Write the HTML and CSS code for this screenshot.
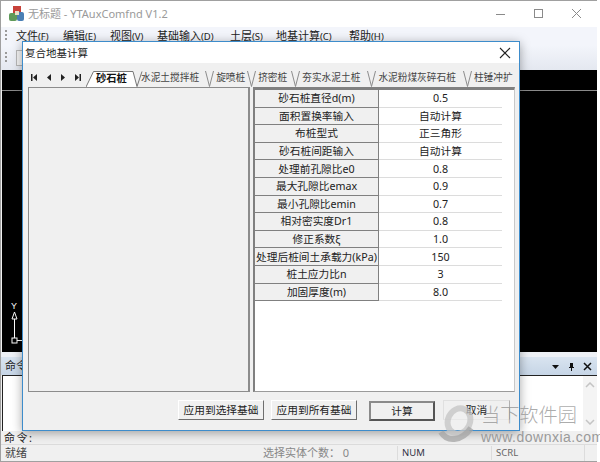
FILE: index.html
```html
<!DOCTYPE html>
<html lang="zh-CN">
<head>
    <meta charset="UTF-8">
    <title>无标题 - YTAuxComfnd V1.2</title>
    <link rel="stylesheet" href="styles.css">
</head>
<body>

    <div class="app">
        <!-- Main window title -->
        <div class="titlebar">
            <svg class="app-icon" width="18" height="18" viewBox="0 0 18 18">
                <rect x="5" y="1" width="8" height="7" fill="#c8423a"/>
                <rect x="1" y="8" width="8" height="8" rx="2" fill="#5f9a5a"/>
                <rect x="9" y="7" width="7" height="9" rx="2" fill="#4a7fb5"/>
                <rect x="7" y="6" width="4" height="4" fill="#e8e0c8"/>
            </svg>
            <span class="app-title">无标题 - YTAuxComfnd V1.2</span>
            <div class="win-controls">
                <svg width="12" height="12" viewBox="0 0 12 12"><path d="M1 6.500h9" stroke="#8a8a8a" fill="none"/></svg>
                <svg width="12" height="12" viewBox="0 0 12 12"><rect x="1.500" y="1.500" width="8" height="8" stroke="#8a8a8a" fill="none"/></svg>
                <svg width="12" height="12" viewBox="0 0 12 12"><path d="M1 1l9 9M10 1l-9 9" stroke="#8a8a8a" fill="none"/></svg>
            </div>
        </div>

        <!-- Menu -->
        <div class="menubar">
            <span class="grip"></span>
            <span class="menu-item m2">文件<small>(F)</small></span>
            <span class="menu-item m2">编辑<small>(E)</small></span>
            <span class="menu-item m2">视图<small>(V)</small></span>
            <span class="menu-item m3">基础输入<small>(D)</small></span>
            <span class="menu-item m4">土层<small>(S)</small></span>
            <span class="menu-item m3">地基计算<small>(C)</small></span>
            <span class="menu-item">帮助<small>(H)</small></span>
        </div>

        <!-- Toolbar, almost all under the dialog -->
        <div class="toolbar">
            <span class="grip"></span>
            <span class="tool-btn"></span>
        </div>

        <!-- Black drawing area -->
        <div class="canvas">
            <div class="canvas-line"></div>
            <svg class="ucs" width="24" height="44" viewBox="0 0 24 44">
                <text x="10" y="9" class="ucs-label">Y</text>
                <path d="M13.500 12l-2.500 7h5z M13.500 19v19" stroke="#fff" fill="none"/>
                <rect x="11" y="38" width="5" height="5" stroke="#fff" fill="none"/>
                <path d="M16 40.500h8" stroke="#fff"/>
            </svg>
        </div>

        <!-- Command pane -->
        <div class="cmd-gap"></div>
        <div class="cmd-header">
            <span>命令</span>
            <div class="cmd-tools">
                <svg width="9" height="9" viewBox="0 0 9 9"><path d="M1 3h7L4.500 7z" fill="#111"/></svg>
                <svg width="9" height="9" viewBox="0 0 9 9"><path d="M3 1h3v4h1v1H5v3H4V6H2V5h1z" fill="#111"/></svg>
                <svg width="9" height="9" viewBox="0 0 9 9"><path d="M1 1l7 7M8 1L1 8" stroke="#111" stroke-width="1.500" fill="none"/></svg>
            </div>
        </div>
        <div class="cmd-box">
            <div class="cmd-text"></div>
            <div class="cmd-scroll">
                <svg width="10" height="6" viewBox="0 0 10 6"><path d="M1 5l4-4 4 4" stroke="#c4c4c4" stroke-width="1.500" fill="none"/></svg>
                <svg width="10" height="6" viewBox="0 0 10 6"><path d="M1 1l4 4 4-4" stroke="#c4c4c4" stroke-width="1.500" fill="none"/></svg>
            </div>
        </div>
        <div class="cmd-line">命令:</div>

        <!-- Status bar -->
        <div class="statusbar">
            <span class="st-ready">就绪</span>
            <span class="st-count">选择实体个数： 0</span>
            <span class="st-num">NUM</span>
            <span class="st-scrl">SCRL</span>
            <span class="st-grip"></span>
        </div>
    </div>

    <!-- Dialog floating over the main window -->
    <div class="dialog">
        <div class="dialog-title">
            <span>复合地基计算</span>
            <svg width="12" height="12" viewBox="0 0 12 12"><path d="M1 1l10 10M11 1L1 11" stroke="#222" stroke-width="1.100" fill="none"/></svg>
        </div>

        <div class="tabstrip">
            <div class="tab-nav">
                <svg width="6" height="7" viewBox="0 0 6 7"><path d="M0 0h1.500v7H0z M6 0v7L2 3.500z" fill="#222"/></svg>
                <svg width="4" height="7" viewBox="0 0 4 7"><path d="M4 0v7L0 3.500z" fill="#222"/></svg>
                <svg width="4" height="7" viewBox="0 0 4 7"><path d="M0 0v7l4-3.500z" fill="#222"/></svg>
                <svg width="6" height="7" viewBox="0 0 6 7"><path d="M0 0v7l4-3.500z M4.500 0H6v7H4.500z" fill="#222"/></svg>
            </div>
            <div class="tab tab-active">
                <svg class="tab-shape" width="58" height="16" viewBox="0 0 58 16"><path d="M0 16L7.500 .5H47L51 16" fill="#fff"/><path d="M0 16L7.500 .5H47L51 15.500L56 .5" stroke="#777" fill="none"/></svg>
                <span class="tab-label">砂石桩</span>
            </div>
            <div class="tab t1">水泥土搅拌桩</div>
            <svg class="tab-sep" width="9" height="16" viewBox="0 0 9 16"><path d="M.5 0L4.500 15.500L8.500 0" stroke="#8c8c8c" fill="none"/></svg>
            <div class="tab">旋喷桩</div>
            <svg class="tab-sep" width="9" height="16" viewBox="0 0 9 16"><path d="M.5 0L4.500 15.500L8.500 0" stroke="#8c8c8c" fill="none"/></svg>
            <div class="tab t3">挤密桩</div>
            <svg class="tab-sep" width="9" height="16" viewBox="0 0 9 16"><path d="M.5 0L4.500 15.500L8.500 0" stroke="#8c8c8c" fill="none"/></svg>
            <div class="tab t4">夯实水泥土桩</div>
            <svg class="tab-sep" width="9" height="16" viewBox="0 0 9 16"><path d="M.5 0L4.500 15.500L8.500 0" stroke="#8c8c8c" fill="none"/></svg>
            <div class="tab t4">水泥粉煤灰碎石桩</div>
            <svg class="tab-sep" width="9" height="16" viewBox="0 0 9 16"><path d="M.5 0L4.500 15.500L8.500 0" stroke="#8c8c8c" fill="none"/></svg>
            <div class="tab">柱锤冲扩</div>
        </div>

        <div class="panes">
            <div class="pane-left"></div>
            <div class="pane-right">
                <div class="prop-grid">
                    <div class="prop-name">砂石桩直径d(m)</div><div class="prop-value">0.5</div>
                    <div class="prop-name">面积置换率输入</div><div class="prop-value">自动计算</div>
                    <div class="prop-name">布桩型式</div><div class="prop-value">正三角形</div>
                    <div class="prop-name">砂石桩间距输入</div><div class="prop-value">自动计算</div>
                    <div class="prop-name">处理前孔隙比e0</div><div class="prop-value">0.8</div>
                    <div class="prop-name">最大孔隙比emax</div><div class="prop-value">0.9</div>
                    <div class="prop-name">最小孔隙比emin</div><div class="prop-value">0.7</div>
                    <div class="prop-name">相对密实度Dr1</div><div class="prop-value">0.8</div>
                    <div class="prop-name">修正系数ξ</div><div class="prop-value">1.0</div>
                    <div class="prop-name">处理后桩间土承载力(kPa)</div><div class="prop-value">150</div>
                    <div class="prop-name">桩土应力比n</div><div class="prop-value">3</div>
                    <div class="prop-name">加固厚度(m)</div><div class="prop-value">8.0</div>
                </div>
            </div>
        </div>

        <div class="dialog-buttons">
            <button class="btn btn-wide">应用到选择基础</button>
            <button class="btn btn-wide">应用到所有基础</button>
            <button class="btn btn-default">计算</button>
            <button class="btn btn-flat">取消</button>
        </div>
    </div>

    <!-- Watermark in the corner -->
    <div class="watermark">
        <svg class="wm-logo" width="40" height="40" viewBox="0 0 40 40">
            <ellipse cx="21" cy="17" rx="11" ry="13" transform="rotate(25 21 17)" stroke="#c4c4c4" stroke-width="6" fill="none" opacity=".75"/>
            <path d="M3 28c6 10 20 10 30-4" stroke="#a4a4a4" stroke-width="6" fill="none" opacity=".75"/>
        </svg>
        <div class="wm-text">
            <div class="wm-name">当下软件园</div>
            <div class="wm-url">www.downxia.com</div>
        </div>
    </div>

</body>
</html>
```

FILE: styles.css
```css
/* Reset */
* {
    margin: 0;
    padding: 0;
    box-sizing: border-box;
}

body {
    width: 600px;
    height: 462px;
    overflow: hidden;
    position: relative;
    background: #fff;
    font-family: "Noto Sans", "Noto Sans CJK SC", sans-serif;
    font-size: 11px;
    line-height: 14px;
    color: #222;
}

/* Main window */
.app {
    width: 597px;
    height: 462px;
    display: flex;
    flex-direction: column;
    border-top: 1px solid #a0a0a0;
    border-left: 1px solid #a0a0a0;
    border-bottom: 1px solid #a0a0a0;
    background: #f0f0f0;
}

.titlebar {
    height: 26px;
    flex: none;
    display: flex;
    align-items: center;
    background: #fff;
    padding: 0 14px 0 7px;
}

.app-icon {
    margin-right: 2px;
}

.app-title {
    color: #9a9a9a;
    font-size: 11px;
}

.win-controls {
    margin-left: auto;
    display: flex;
    gap: 26px;
}

.menubar {
    height: 18px;
    flex: none;
    display: flex;
    align-items: center;
    background: #f3f5fb;
    padding-left: 4px;
}

.grip {
    width: 2px;
    height: 12px;
    margin-right: 9px;
    flex: none;
    background: repeating-linear-gradient(#9a9a9a 0 2px, transparent 2px 4px);
}

.menu-item {
    color: #222;
}

.menu-item small {
    font-size: 9.500px;
}

.m2 { width: 47px; }
.m3 { width: 73px; }
.m4 { width: 46px; }

.toolbar {
    height: 25px;
    flex: none;
    display: flex;
    align-items: center;
    background: linear-gradient(#f3f5fb, #e4e8f0);
    padding-left: 4px;
}

.tool-btn {
    width: 10px;
    height: 16px;
    background: #f4f4f4;
    border: 1px solid #b8b8b8;
}

.canvas {
    flex: 1;
    background: #000;
    margin-left: 1px;
    position: relative;
}

.canvas-line {
    height: 1px;
    margin-top: 20px;
    background: #8a8a8a;
}

/* UCS marker sits on the drawing itself */
.ucs {
    position: absolute;
    left: -1px;
    bottom: 8px;
}

.ucs-label {
    font-family: "Liberation Sans", sans-serif;
    font-size: 9px;
    fill: #fff;
}

.cmd-gap {
    height: 5px;
    flex: none;
    background: #eef1f6;
}

.cmd-header {
    height: 18px;
    flex: none;
    display: flex;
    align-items: center;
    justify-content: space-between;
    padding: 0 5px 0 4px;
    background: linear-gradient(#d9e4f0, #c6d5e6);
}

.cmd-tools {
    display: flex;
    gap: 7px;
}

.cmd-box {
    height: 56px;
    flex: none;
    display: flex;
    border-top: 1px solid #222;
    border-left: 1px solid #222;
    margin-left: 1px;
    background: #fff;
}

.cmd-text {
    flex: 1;
}

.cmd-scroll {
    width: 14px;
    display: flex;
    flex-direction: column;
    justify-content: space-between;
    align-items: center;
    padding: 6px 0;
    background: #f4f4f4;
}

.cmd-line {
    height: 13px;
    flex: none;
    line-height: 13px;
    padding-left: 3px;
    letter-spacing: 1.500px;
    background: #f0f0f0;
}

.statusbar {
    height: 17px;
    flex: none;
    display: flex;
    align-items: center;
    border-top: 1px solid #dcdcdc;
    background: #f0f0f0;
    color: #444;
}

.st-ready {
    width: 262px;
    padding-left: 4px;
}

.st-count {
    width: 134px;
    color: #888;
}

.st-num {
    width: 94px;
    padding-left: 4px;
    border-left: 1px solid #dcdcdc;
    color: #334;
    font-size: 9.500px;
}

.st-scrl {
    width: 93px;
    padding-left: 4px;
    border-left: 1px solid #dcdcdc;
    color: #666;
    font-size: 9.500px;
}

.st-grip {
    flex: 1;
    height: 100%;
    border-left: 1px solid #dcdcdc;
}

/* Dialog */
.dialog {
    position: absolute;
    left: 22px;
    top: 41px;
    width: 498px;
    height: 390px;
    display: flex;
    flex-direction: column;
    background: #f0f0f0;
    border: 1px solid #3d8ccb;
    box-shadow: 0 2px 10px rgba(0, 0, 0, 0.35);
}

.dialog-title {
    height: 21px;
    flex: none;
    display: flex;
    align-items: center;
    justify-content: space-between;
    padding: 0 8px 0 2px;
    background: #fff;
    color: #222;
    font-size: 10.500px;
}

.tabstrip {
    height: 24px;
    flex: none;
    display: flex;
    align-items: flex-end;
    overflow: hidden;
    padding-left: 8px;
}

.tab-nav {
    width: 55px;
    height: 20px;
    display: flex;
    align-items: center;
    gap: 10px;
    flex: none;
}

.tab {
    height: 16px;
    flex: none;
    line-height: 14px;
    font-size: 9.700px;
    color: #444;
    white-space: nowrap;
}

.tab-active {
    width: 50px;
    margin-right: 5px;
    padding-left: 10px;
    position: relative;
    font-weight: 700;
    font-size: 10.300px;
    color: #111;
}

.tab-shape {
    position: absolute;
    left: 0;
    top: 0;
}

.tab-label {
    position: relative;
}

.tab-sep {
    flex: none;
    margin: 0 2px;
}

.t1 { padding-right: 4px; }
.t3 { padding-right: 2px; }
.t4 { padding-right: 5px; }

.panes {
    height: 305px;
    flex: none;
    display: flex;
    gap: 3px;
    padding: 0 4px 0 5px;
}

.pane-left {
    width: 222px;
    flex: none;
    background: #f0f0f0;
    border: 1px solid #8c8c8c;
    border-right-width: 2px;
}

.pane-right {
    flex: 1;
    background: #fff;
    border-top: 3px solid #808080;
    border-left: 2px solid #808080;
    border-bottom: 1px solid #9a9a9a;
    border-right: 1px solid #c8c8c8;
}

.prop-grid {
    display: grid;
    grid-template-columns: 124px 123px;
    grid-auto-rows: 17.600px;
    width: 247px;
    border-right: 1px solid #d8d8d8;
}

.prop-name,
.prop-value {
    display: flex;
    align-items: center;
    justify-content: center;
    font-size: 10.700px;
    color: #222;
    white-space: nowrap;
}

.prop-name {
    background: #f0f0f0;
    border-bottom: 1px solid #808080;
    border-right: 1px solid #808080;
}

.prop-value {
    background: #fff;
    border-bottom: 1px solid #dcdcdc;
}

.dialog-buttons {
    flex: 1;
    display: flex;
    align-items: flex-start;
    padding: 8px 0 0 155px;
}

.btn {
    height: 20px;
    font-family: inherit;
    font-size: 10.700px;
    line-height: 14px;
    color: #222;
    background: #f0f0f0;
    border: 1px solid;
    border-color: #fff #6e6e6e #6e6e6e #fff;
}

.btn-wide {
    width: 86px;
    margin-right: 7px;
}

.btn-default {
    width: 66px;
    margin: 1px 8px 0 5px;
    border: 2px solid;
    border-color: #8a8a8a #555 #555 #8a8a8a;
}

.btn-flat {
    width: 67px;
    border-color: #e0e0e0 #b0b0b0 #e8e8e8 #e0e0e0;
}

/* Watermark */
.watermark {
    position: absolute;
    left: 438px;
    top: 404px;
    display: flex;
    gap: 3px;
}

.wm-text {
    display: flex;
    flex-direction: column;
    gap: 5px;
}

.wm-name {
    font-size: 19.200px;
    line-height: 22px;
    font-weight: 300;
    color: rgba(150, 150, 150, 0.8);
}

.wm-url {
    font-family: "Liberation Sans", sans-serif;
    font-size: 14px;
    line-height: 13px;
    letter-spacing: 0.500px;
    color: #9a9a9a;
}
```
